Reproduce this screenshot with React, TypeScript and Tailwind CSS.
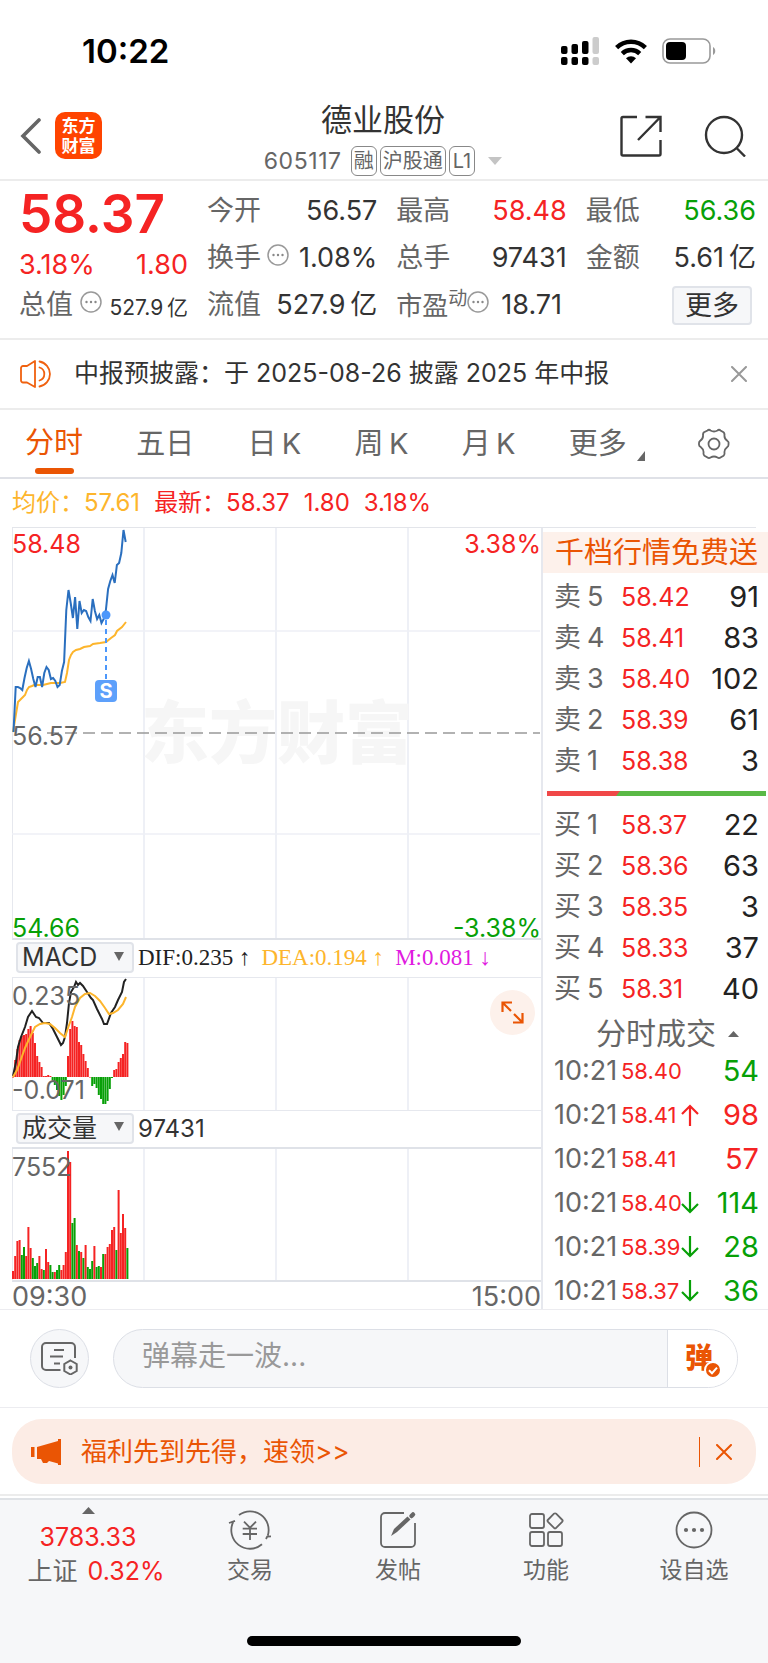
import {FC, ReactNode} from "react";

const STEP = 2.2; // horizontal distance between two minutes

const prices = [
    204, 159, 159, 160, 162, 150, 140, 133, 141, 151, 159, 149, 149, 159, 145, 139, 142, 151, 150, 153, 159, 157, 143,
    134, 82, 62, 75, 90, 69, 101, 73, 85, 82, 83, 89, 93, 71, 83, 91, 87, 95, 91, 82, 61, 53, 47, 55, 37, 35, 25, 2, 14,
];

const averageLine =
    "1,204 4,186 6,174 9,171 11,169 13,167 15,162 17,159 20,158 22,157 31,157 35,156 39,155 48,155 53,154 55,145 57,132 59,127 61,124 64,122 68,121 72,119 78,118 81,116 88,115 94,114 99,110 103,107 105,103 110,99 114,94";

const difLine =
    "1,98 4,84 6,69 9,59 13,49 16,39 20,33 24,39 27,40 31,45 37,45 41,51 45,59 49,67 51,65 53,59 55,45 57,25 59,14 62,9 64,4 66,7 68,5 71,8 75,14 79,20 81,22 85,31 90,41 92,46 95,46 99,35 103,29 106,22 110,14 112,4 114,1";

const deaLine =
    "1,99 5,92 8,84 13,70 18,59 23,49 28,46 33,45 38,46 43,50 48,55 53,59 56,50 60,39 63,29 68,20 73,16 78,15 83,18 88,23 93,30 97,36 101,35 106,32 111,26 114,19";

const macdBars = [
    0, 17, 28, 37, 41, 42, 43, 48, 51, 44, 34, 21, 15, 10, 1, 1, 2, 1, -3, -8, -13, -19, -23, -18, -9, 21, 48, 56, 51,
    50, 35, 32, 23, 16, 9, 0, -9, -7, -11, -18, -22, -27, -27, -24, -12, -1, 7, 8, 15, 19, 23, 35, 34,
];

// Negative numbers are minutes in which the price fell
const volumeBars = [
    8, 23, 38, 39, -24, -32, 23, 52, 31, -21, -13, -16, 23, 10, -9, 30, 17, -14, -7, 7, -9, -14, 9, 14, 27, 128, 117,
    -56, -61, 34, -28, 27, -21, 34, -12, -10, -18, 33, -12, -13, 12, -25, 25, 32, 35, 49, 52, -29, 89, 46, 65, 51, -31,
];

const sells = [
    ["卖5", "58.42", "91"],
    ["卖4", "58.41", "83"],
    ["卖3", "58.40", "102"],
    ["卖2", "58.39", "61"],
    ["卖1", "58.38", "3"],
];

const buys = [
    ["买1", "58.37", "22"],
    ["买2", "58.36", "63"],
    ["买3", "58.35", "3"],
    ["买4", "58.33", "37"],
    ["买5", "58.31", "40"],
];

const trades = [
    {price: "58.40", arrow: "", volume: "54", up: false},
    {price: "58.41", arrow: "up", volume: "98", up: true},
    {price: "58.41", arrow: "", volume: "57", up: true},
    {price: "58.40", arrow: "down", volume: "114", up: false},
    {price: "58.39", arrow: "down", volume: "28", up: false},
    {price: "58.37", arrow: "down", volume: "36", up: false},
];

const InfoIcon: FC = () => (
    <svg width="22" height="22" viewBox="0 0 22 22" fill="none" className="mb-2 shrink-0">
        <circle cx="11" cy="11" r="10" stroke="#999" strokeWidth="1.5"/>
        <circle cx="6.5" cy="11" r="1.2" fill="#888"/>
        <circle cx="11" cy="11" r="1.2" fill="#888"/>
        <circle cx="15.5" cy="11" r="1.2" fill="#888"/>
    </svg>
);

const StatusBar: FC = () => (
    <div className="flex h-[94px] items-center justify-between pt-2 pr-[52px] pl-[82px]">
        <span className="text-[33px] leading-10 font-semibold text-black">10:22</span>
        <div className="flex items-center gap-[15px]">
            <svg width="39" height="28" viewBox="0 0 39 28">
                <g fill="#000">
                    <rect x="0" y="9" width="6.5" height="8" rx="2"/>
                    <rect x="10.5" y="7" width="6.5" height="10" rx="2"/>
                    <rect x="21" y="4" width="6.5" height="13" rx="2"/>
                    <rect x="0" y="20" width="6.5" height="8" rx="2"/>
                    <rect x="10.5" y="20" width="6.5" height="8" rx="2"/>
                    <rect x="21" y="20" width="6.5" height="8" rx="2"/>
                </g>
                <g fill="#ccc">
                    <rect x="31.5" y="0" width="6.5" height="17" rx="2"/>
                    <rect x="31.5" y="20" width="6.5" height="8" rx="2"/>
                </g>
            </svg>
            <svg width="32" height="25" viewBox="0 0 32 25" fill="none" stroke="#000" strokeWidth="4.4">
                <path d="M1.6 8.6a20.5 20.5 0 0 1 28.8 0"/>
                <path d="M7.3 14.6a12.4 12.4 0 0 1 17.4 0"/>
                <path d="M16 24.5l-5-5.2a7.3 7.3 0 0 1 10 0z" fill="#000" stroke="none"/>
            </svg>
            <svg width="54" height="26" viewBox="0 0 54 26">
                <rect x="1" y="1" width="47" height="24" rx="7" fill="none" stroke="#999" strokeWidth="1.6"/>
                <rect x="4" y="4" width="20" height="18" rx="4" fill="#000"/>
                <path d="M51 9c3 1.5 3 6.5 0 8z" fill="#999"/>
            </svg>
        </div>
    </div>
);

const Header: FC = () => (
    <header className="flex h-[87px] items-center justify-between border-b-2 border-[#ececec] pr-[22px] pb-0.5 pl-5">
        <div className="flex w-[200px] items-center gap-3.5">
            <button aria-label="返回">
                <svg width="21" height="36" viewBox="0 0 21 36" fill="none" stroke="#666" strokeWidth="3.6">
                    <path d="M19 2L3 18l16 16" strokeLinecap="round"/>
                </svg>
            </button>
            <div
                className="flex size-[47px] flex-col items-center justify-center rounded-[10px] bg-[#ff4400] text-[17px] leading-5 font-bold text-white">
                <span>东方</span>
                <span>财富</span>
            </div>
        </div>
        <div className="flex flex-col items-center pt-1.5">
            <h1 className="text-[31px] leading-[38px] text-[#333]">德业股份</h1>
            <div className="mt-1.5 flex items-center gap-[3px] text-[#666]">
                <span className="mr-1.5 text-[23px] leading-8 tracking-wide">605117</span>
                <span className="rounded-md border border-[#888] px-0.5 text-xl leading-7">融</span>
                <span className="rounded-md border border-[#888] px-0.5 text-xl leading-7">沪股通</span>
                <span className="rounded-md border border-[#888] px-[3px] text-xl leading-7">L1</span>
                <svg width="14" height="8" viewBox="0 0 14 8" className="ml-2.5">
                    <path d="M0 0h14L7 8z" fill="#c4c4c4"/>
                </svg>
            </div>
        </div>
        <div className="flex w-[200px] items-center justify-end gap-[42px]">
            <button aria-label="分享">
                <svg width="42" height="42" viewBox="0 0 42 42" fill="none" stroke="#333" strokeWidth="2.4">
                    <path d="M17 2H3a1.5 1.5 0 0 0-1.5 1.5V39A1.5 1.5 0 0 0 3 40.5h36a1.5 1.5 0 0 0 1.5-1.5V25"/>
                    <path d="M25.5 2h15v15M40 2.5L18 25"/>
                </svg>
            </button>
            <button aria-label="搜索">
                <svg width="42" height="42" viewBox="0 0 42 42" fill="none" stroke="#333" strokeWidth="2.4">
                    <circle cx="20" cy="20" r="18"/>
                    <path d="M32 32.5l9 9"/>
                </svg>
            </button>
        </div>
    </header>
);

const Stat: FC<{ label: ReactNode; value?: string; color?: string; children?: ReactNode }> = ({
    label, value, color = "text-[#333]", children,
}) => (
    <div className="flex h-[47px] items-center justify-between text-[27px]">
        <span className="flex items-center gap-1.5 text-[#666]">{label}</span>
        {value && <span className={color}>{value}</span>}
        {children}
    </div>
);

const Quote: FC = () => (
    <section className="flex border-b-2 border-[#ececec] pt-[7px] pr-3 pb-[9px] pl-[19px] whitespace-nowrap">
        <div className="w-[169px]">
            <div className="flex h-[54px] items-center text-[53px] font-semibold text-[#f52323]">58.37</div>
            <div className="flex h-10 items-center justify-between pt-1.5 text-[27px] text-[#f52323]">
                <span>3.18%</span>
                <span>1.80</span>
            </div>
            <div className="flex h-[47px] items-center justify-between text-[#666]">
                <span className="text-[27px]">总值</span>
                <InfoIcon/>
                <span className="pt-1 text-[21px] text-[#333]">527.9{"\u2009"}亿</span>
            </div>
        </div>
        <div className="ml-[19px] grid flex-1 grid-cols-3 gap-x-[19px]">
            <Stat label="今开" value="56.57"/>
            <Stat label="最高" value="58.48" color="text-[#f52323]"/>
            <Stat label="最低" value="56.36" color="text-[#07a007]"/>
            <Stat label={<>换手<InfoIcon/></>} value="1.08%"/>
            <Stat label="总手" value="97431"/>
            <Stat label="金额" value={"5.61\u2009亿"}/>
            <Stat label="流值" value={"527.9\u2009亿"}/>
            <div className="flex h-[47px] items-center text-[26px] text-[#666]">
                市盈
                <span className="mb-3 text-[19px]">动</span>
                <InfoIcon/>
                <span className="ml-3 text-[27px] text-[#333]">18.71</span>
            </div>
            <Stat label="">
                <button
                    className="mr-1 h-[39px] rounded border-2 border-[#e0e3e9] bg-[#f6f7f9] px-[11px] text-[27px] leading-8 text-[#333]">
                    更多
                </button>
            </Stat>
        </div>
    </section>
);

const Notice: FC = () => (
    <section className="flex h-[70px] items-center border-b-2 border-[#ececec] pr-[21px] pl-5">
        <svg width="33" height="28" viewBox="0 0 33 28" fill="none" stroke="#f0610f" strokeWidth="1.8">
            <path d="M15 1v26L7 22.5H3a2 2 0 0 1-2-2V8a2 2 0 0 1 2-2h4z" strokeLinejoin="round"/>
            <path d="M19.5 7.5a6.8 6.8 0 0 1 0 13M19.5 1.5a12.7 12.7 0 0 1 0 25" strokeLinecap="round"/>
        </svg>
        <p className="ml-[21px] flex-1 text-[25px] whitespace-nowrap text-[#333]">
            中报预披露：于 2025-08-26 披露 2025 年中报
        </p>
        <button aria-label="关闭">
            <svg width="16" height="16" viewBox="0 0 16 16" stroke="#999" strokeWidth="2" strokeLinecap="round">
                <path d="M1 1l14 14M15 1L1 15"/>
            </svg>
        </button>
    </section>
);

const Tabs: FC = () => (
    <nav className="flex h-[69px] items-center justify-between border-b-2 border-[#dfe1e7] pr-[38px] pl-[25px] text-[29px] text-[#666]">
        <button className="flex h-full flex-col items-center pt-3 text-[#ea5504]">
            <span className="leading-[42px]">分时</span>
            <span className="mt-1 h-1.5 w-[39px] rounded-full bg-[#ea5504]"/>
        </button>
        <button>五日</button>
        <button>日{"\u2009"}K</button>
        <button>周{"\u2009"}K</button>
        <button>月{"\u2009"}K</button>
        <button className="flex items-end gap-2.5">
            更多
            <svg width="8" height="10" viewBox="0 0 8 10" className="mb-1">
                <path d="M8 0v10H0z" fill="#666"/>
            </svg>
        </button>
        <button aria-label="设置">
            <svg width="32" height="32" viewBox="0 0 32 32" fill="none" stroke="#666" strokeWidth="1.8">
                <path
                    d="M9.5 2.5q1.5-1.5 3 0 3.5 2 7 0 1.5-1.5 3 0l3 1.8q1.2 1 1 2.7-.5 3.5 3 6 1.5 1 1 2.7v1q0 1.5-1.2 2.3-3.3 2.5-2.8 6 .2 1.7-1 2.7l-3 1.8q-1.5 1.2-3 0-3.5-2-7 0-1.5 1.2-3 0l-3-1.8q-1.2-1-1-2.7.5-3.5-2.8-6Q1 18 1 16.7v-1q-.2-1.5 1-2.7 3.5-2.5 3-6-.2-1.7 1-2.7z"/>
                <circle cx="16" cy="16" r="5.5"/>
            </svg>
        </button>
    </nav>
);

const Panel: FC<{ className: string; children: ReactNode }> = ({className, children}) => (
    <div className={`relative border-l border-[#e6e8ee] ${className}`}>
        <div className="grid h-full grid-cols-4">
            <div className="border-r-2 border-[#eef0f6]"/>
            <div className="border-r-2 border-[#eef0f6]"/>
            <div className="border-r-2 border-[#eef0f6]"/>
            <div/>
        </div>
        {children}
    </div>
);

const PriceChart: FC = () => (
    <Panel className="h-[412px] border-b-2 border-b-[#dfe2e8]">
        <div
            className="absolute inset-0 flex items-center justify-center text-[68px] font-black text-[#f6f6f6]">东方财富
        </div>
        <svg className="absolute inset-y-0 -left-px h-full w-full" fill="none">
            <path d="M0 103h540M0 306h540" stroke="#eef0f6" strokeWidth="1.5"/>
            <path d="M35 205h540" stroke="#999" strokeWidth="1.6" strokeDasharray="12 6"/>
            <polyline points={averageLine} stroke="#fdb52c" strokeWidth="2"/>
            <polyline points={prices.map((y, i) => `${1.5 + i * STEP},${y}`).join(" ")} stroke="#2a6fbf"
                      strokeWidth="2"/>
            <path d="M94 92v60" stroke="#4c97fb" strokeWidth="2" strokeDasharray="5 4"/>
            <circle cx="94" cy="87" r="4.5" fill="#4c97fb"/>
        </svg>
        <span
            className="absolute top-[152px] left-[82px] flex size-[22px] items-center justify-center rounded bg-[#5da0fb] text-xl font-bold text-white">S</span>
        <span className="absolute top-0 -left-px leading-8 text-[#f52323]">58.48</span>
        <span className="absolute top-0 right-0 leading-8 text-[#f52323]">3.38%</span>
        <span className="absolute top-48 -left-px leading-8 text-[#666]">56.57</span>
        <span className="absolute -bottom-1.5 -left-px leading-8 text-[#07a007]">54.66</span>
        <span className="absolute right-0 -bottom-1.5 leading-8 text-[#07a007]">-3.38%</span>
    </Panel>
);

const IndicatorSelect: FC<{ name: string; label: string }> = ({name, label}) => (
    <div className="relative mr-1 ml-1">
        <select aria-label={label}
                className="h-[31px] w-[118px] appearance-none rounded border-2 border-[#e0e3e9] bg-[#f6f7f9] pl-1 text-[25px] leading-[27px] text-[#333]">
            <option>{name}</option>
        </select>
        <svg width="10" height="9" viewBox="0 0 10 9" className="pointer-events-none absolute top-[11px] right-2.5">
            <path d="M0 0h10L5 9z" fill="#666"/>
        </svg>
    </div>
);

const MacdChart: FC = () => (
    <>
        <div className="flex h-[38px] items-center border-b border-[#e6e8ee] font-['Liberation_Serif',serif] text-[23px] whitespace-nowrap">
            <div className="font-['Inter','Noto_Sans_CJK_SC',sans-serif]">
                <IndicatorSelect name="MACD" label="指标"/>
            </div>
            <span className="text-[#222]">DIF:0.235 ↑</span>
            <span className="ml-[11px] text-[#fdb52c]">DEA:0.194 ↑</span>
            <span className="ml-[11px] text-[#e01ae0]">M:0.081 ↓</span>
        </div>
        <Panel className="h-[133px] border-b border-b-[#e6e8ee]">
            <svg className="absolute inset-y-0 -left-px h-full w-full" fill="none">
                {macdBars.map((v, i) => (
                    <rect key={i} x={i * STEP} y={v > 0 ? 99 - v : 99} width="2" height={Math.max(Math.abs(v), 0.5)}
                          fill={v < 0 ? "#07a007" : "#f52323"}/>
                ))}
                <polyline points={difLine} stroke="#222" strokeWidth="2"/>
                <polyline points={deaLine} stroke="#fdb52c" strokeWidth="2"/>
            </svg>
            <span className="absolute top-0.5 -left-px leading-8 text-[#666]">0.235</span>
            <span className="absolute top-[96px] -left-px leading-8 text-[#666]">-0.071</span>
            <button aria-label="放大"
                    className="absolute top-3 right-1.5 flex size-[45px] items-center justify-center rounded-full bg-[#fdf1eb]">
                <svg width="23" height="23" viewBox="0 0 23 23" fill="none" stroke="#ea5504" strokeWidth="2.2">
                    <path d="M1.5 11V1.5H11M1.5 1.5L10 10M12 21.5h9.5V12M21.5 21.5L13 13"/>
                </svg>
            </button>
        </Panel>
    </>
);

const VolumeChart: FC = () => (
    <>
        <div className="flex h-[38px] items-center border-b-2 border-[#dfe2e8] text-[24px] text-[#333]">
            <IndicatorSelect name="成交量" label="副图"/>
            <span>97431</span>
        </div>
        <Panel className="h-[133px] border-b-2 border-b-[#dfe2e8]">
            <svg className="absolute inset-y-0 -left-px h-full w-full">
                {volumeBars.map((v, i) => (
                    <rect key={i} x={i * STEP} y={130 - Math.abs(v)} width="2" height={Math.abs(v)}
                          fill={v < 0 ? "#07a007" : "#f52323"}/>
                ))}
            </svg>
            <span className="absolute top-0.5 -left-px leading-8 text-[#666]">7552</span>
        </Panel>
        <div className="flex h-[27px] items-center justify-between pt-1 text-[27px] text-[#666]">
            <span>09:30</span>
            <span>15:00</span>
        </div>
    </>
);

const OrderTable: FC<{ rows: string[][] }> = ({rows}) => (
    <table className="w-full table-fixed">
        <tbody>
        {rows.map(([label, price, amount]) => (
            <tr key={label} className="h-[41px]">
                <td className="w-[67px] p-0 text-[27px] leading-8 text-[#666]">
                    <span className="flex gap-1.5"><span>{label[0]}</span><span>{label[1]}</span></span>
                </td>
                <td className="w-[72px] p-0 text-[25px] leading-8 text-[#f52323]">{price}</td>
                <td className="p-0 text-right text-[29px] leading-8 text-[#222]">{amount}</td>
            </tr>
        ))}
        </tbody>
    </table>
);

const OrderBook: FC = () => (
    <aside className="w-[225px] shrink-0 whitespace-nowrap">
        <a href="#level2" className="mt-1 flex h-[41px] items-center bg-[#fdf1eb] pl-3 text-[29px] text-[#ea5504]">
            千档行情免费送
        </a>
        <div className="mt-[3px] pr-[9px] pl-[11px]">
            <OrderTable rows={sells}/>
        </div>
        <svg className="mt-[10px] mb-2 block h-[5px] w-full pr-0.5 pl-1" viewBox="0 0 219 5"
             preserveAspectRatio="none">
            <path d="M0 0h219v5H0z" fill="#5ab946"/>
            <path d="M0 0h73l-4 5H0z" fill="#f04848"/>
        </svg>
        <div className="pr-[9px] pl-[11px]">
            <OrderTable rows={buys}/>
        </div>
        <button className="flex h-10 w-full items-end justify-center gap-3 pl-6 text-[30px] leading-8 text-[#666]">
            分时成交
            <svg width="11" height="6" viewBox="0 0 11 6" className="mb-3">
                <path d="M0 6h11L5.5 0z" fill="#666"/>
            </svg>
        </button>
        <div className="-mb-1 pr-[9px] pl-[11px]">
            <table className="w-full table-fixed">
                <tbody>
                {trades.map((t, i) => (
                    <tr key={i} className="h-11">
                        <td className="w-[67px] p-0 text-[27px] leading-8 text-[#666]">10:21</td>
                        <td className="w-[78px] p-0 text-[22px] leading-8 text-[#f52323]">
                            <span className="flex items-center">
                                <span className="w-[60px]">{t.price}</span>
                                {t.arrow && (
                                    <svg width="18" height="22" viewBox="0 0 18 22" fill="none" strokeWidth="2.2"
                                         stroke={t.up ? "#f52323" : "#07a007"} className="shrink-0">
                                        <path
                                            d={t.arrow === "up" ? "M9 22V2M1 10l8-8 8 8" : "M9 0v20M1 12l8 8 8-8"}/>
                                    </svg>
                                )}
                            </span>
                        </td>
                        <td className={`p-0 text-right text-[29px] leading-8 ${t.up ? "text-[#f52323]" : "text-[#07a007]"}`}>
                            {t.volume}
                        </td>
                    </tr>
                ))}
                </tbody>
            </table>
        </div>
    </aside>
);

const CommentBar: FC = () => (
    <section className="flex h-[99px] items-center gap-6 border-y border-[#ececf0] px-[30px]">
        <button aria-label="弹幕设置"
                className="flex size-[59px] shrink-0 items-center justify-center rounded-full border border-[#dcdfe6] bg-[#f6f7f9]">
            <svg width="37" height="33" viewBox="0 0 37 33" fill="none" stroke="#666" strokeWidth="2">
                <path d="M19.5 28H5a4 4 0 0 1-4-4V5a4 4 0 0 1 4-4h25a4 4 0 0 1 4 4v11"/>
                <path d="M13 8h10M9 14.5h13M13 21.5h6"/>
                <path d="M29.5 18.5l6.2 3.5v7l-6.2 3.5-6.2-3.5v-7z"/>
                <circle cx="29.5" cy="25.5" r="2" fill="#666" stroke="none"/>
            </svg>
        </button>
        <div
            className="flex h-[59px] min-w-0 flex-1 overflow-hidden rounded-full border border-[#dcdfe6] bg-[#f6f7f9]">
            <input aria-label="弹幕" placeholder="弹幕走一波..."
                   className="min-w-0 flex-1 pb-1.5 pl-7 text-[28px] outline-none placeholder:text-[#999]"/>
            <button
                className="relative flex w-[70px] items-center border-l border-[#dcdfe6] bg-white pb-0.5 pl-[17px] text-[28px] font-black text-[#ea5504]">
                弹
                <svg width="18" height="18" viewBox="0 0 18 18" fill="none" className="absolute top-[31px] left-[36px]">
                    <circle cx="9" cy="9" r="8" fill="#ea5504" stroke="#fff" strokeWidth="2"/>
                    <path d="M5 9.2l3 3 5-5.5" stroke="#fff" strokeWidth="2"/>
                </svg>
            </button>
        </div>
    </section>
);

const Promo: FC = () => (
    <section className="border-b-2 border-[#ececec] px-3 pt-[11px] pb-[10px]">
        <div className="flex h-[65px] items-center rounded-[30px] bg-[#fcece5] pr-6 pl-[19px] text-[#ea5504]">
            <svg width="31" height="26" viewBox="0 0 31 26" fill="#ea5504">
                <path d="M0 8h3.5v10H0zM6 8l21-6V0h3v26h-3v-1.5L18 22l-2 2h-4l-2-4H6z"/>
            </svg>
            <a href="#welfare" className="ml-[19px] flex-1 text-[26px]">福利先到先得，速领&gt;&gt;</a>
            <span className="mr-4 h-[30px] w-px bg-[#ea5504]"/>
            <button aria-label="关闭活动">
                <svg width="16" height="16" viewBox="0 0 16 16" stroke="#ea5504" strokeWidth="2"
                     strokeLinecap="round">
                    <path d="M1 1l14 14M15 1L1 15"/>
                </svg>
            </button>
        </div>
    </section>
);

const NavItem: FC<{ label: string; children: ReactNode }> = ({label, children}) => (
    <a href="#nav" className="flex flex-1 flex-col items-center pt-[9px] text-[23px] text-[#666]">
        <svg width="44" height="42" viewBox="0 0 44 42" fill="none" stroke="#666" strokeWidth="1.8">{children}</svg>
        <span className="mt-[3px] leading-8">{label}</span>
    </a>
);

const Footer: FC = () => (
    <footer className="mt-0.5 border-t-2 border-[#dfe2e6] bg-[#f6f7f9]">
        <nav className="flex h-[136px]">
            <a href="#index" className="flex w-44 flex-col items-center pt-[7px] text-[25px] text-[#f52323]">
                <svg width="13" height="7" viewBox="0 0 13 7">
                    <path d="M0 7h13L6.5 0z" fill="#666"/>
                </svg>
                <span className="mt-[7px] leading-8">3783.33</span>
                <span className="mt-0.5 flex items-center gap-2.5 pl-4 leading-8">
                    <span className="text-[#666]">上证</span>0.32%
                </span>
            </a>
            <NavItem label="交易">
                <path d="M11 6A18.6 18.6 0 0 1 39.8 26.5M38 30l1.2-2.5L43 27.3"/>
                <path d="M34 35.3A18.6 18.6 0 0 1 5.2 13M1 14l6-2.2"/>
                <path d="M16 12.7l6 6 6-6M22 18.7V31M14.7 19.7h14.3M14.7 25h14.3"/>
            </NavItem>
            <NavItem label="发帖">
                <path d="M28 4H9a4 4 0 0 0-4 4v26a4 4 0 0 0 4 4h26a4 4 0 0 0 4-4V14"/>
                <path d="M15 27l3-7L31.5 7.5l3 3L21 23z" fill="#666" stroke="none"/>
                <path d="M35.5 7l1.5-1.5" strokeWidth="4.5" strokeLinecap="round"/>
            </NavItem>
            <NavItem label="功能">
                <rect x="6" y="5" width="14" height="14" rx="2"/>
                <rect x="6" y="23" width="14" height="14" rx="2"/>
                <rect x="24" y="23" width="14" height="14" rx="2"/>
                <rect x="25.3" y="6" width="11.5" height="11.5" rx="1.5" transform="rotate(45 31 11.8)"/>
            </NavItem>
            <NavItem label="设自选">
                <circle cx="22" cy="21" r="17.5"/>
                <g fill="#666" stroke="none">
                    <circle cx="14" cy="21" r="2.1"/>
                    <circle cx="22" cy="21" r="2.1"/>
                    <circle cx="30" cy="21" r="2.1"/>
                </g>
            </NavItem>
        </nav>
        <div className="flex h-[27px] justify-center">
            <div className="h-2.5 w-[274px] rounded-full bg-black"/>
        </div>
    </footer>
);

const App: FC = () => {
    return (
        <div className="w-full bg-white font-['Inter','Noto_Sans_CJK_SC',sans-serif] font-[390] text-[#333]">
            <StatusBar/>
            <Header/>
            <Quote/>
            <Notice/>
            <Tabs/>
            <div className="mx-3 flex h-[49px] items-center gap-3.5 border-b border-[#e3e5ea] text-[24px] text-[#f52323]">
                <span className="text-[#fdb52c]">均价：57.61</span>
                <span>最新：58.37</span>
                <span>1.80</span>
                <span>3.18%</span>
            </div>
            <main className="flex pl-3">
                <div className="min-w-0 flex-1 border-r-2 border-[#e6e8ee] text-[25px]">
                    <PriceChart/>
                    <MacdChart/>
                    <VolumeChart/>
                </div>
                <OrderBook/>
            </main>
            <CommentBar/>
            <Promo/>
            <Footer/>
        </div>
    );
};

export default App;
